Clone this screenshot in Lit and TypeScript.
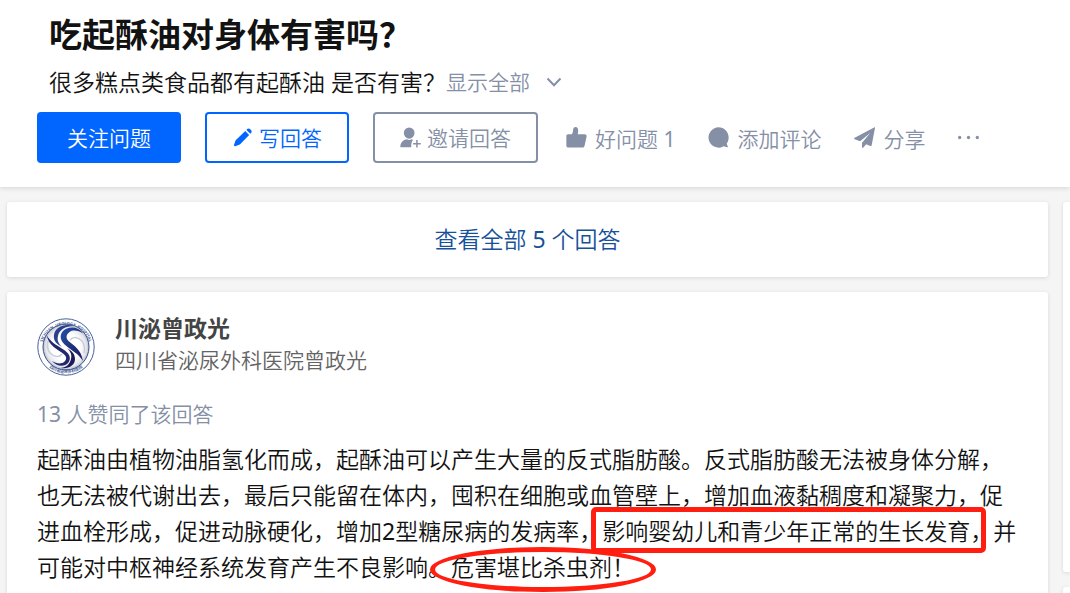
import { LitElement, html, css, svg } from "lit";
import { customElement } from "lit/decorators.js";

const pencil = svg`<svg class="icon" viewBox="0 0 24 24" aria-hidden="true"><path d="M15.2 4.6l4.4 4.4-10.300 10.600c-.3.3-.7.6-1.100.7l-4.600 1.700c-.9.300-1.600-.4-1.300-1.300l1.500-4.700c.1-.4.400-.8.700-1.100zM16.500 3.300l.9-.9c1-1 2.600-.9 3.500.1l.8.800c1 1 1 2.600.1 3.500l-.9.900z"/></svg>`;
const invite = svg`<svg class="icon" viewBox="0 0 24 24" aria-hidden="true"><ellipse cx="10.500" cy="6.900" rx="6.100" ry="6.400"/><path d="M.4 23.200c-.1-5.400 3.200-8.400 7.700-9.100 1 .9 4 .9 5 0 .9.200 1.300.4 1.700.7-1.300 1.600-2.200 3.900-2 8.400zM18.500 14.800h1.700v3.400h3.500v1.700h-3.500v3.500h-1.700v-3.500h-3.500v-1.700h3.500z"/></svg>`;
const thumb = svg`<svg class="icon" viewBox="0 0 24 24" aria-hidden="true"><path d="M.4 10.200c0-1.200.8-2 2-2h4.200c1-1 1.300-2.200 1.500-4.700C8.200 1.300 9.300 0 11 0c1.900 0 2.900 1.500 2.900 4 0 1.800-.2 2.900-.5 4.200h7.800c1.700 0 2.700 1.300 2.300 3l-2.200 9.800c-.4 1.700-1.300 2.500-3 2.500H2.900c-1.500 0-2.500-.9-2.500-2.400z"/></svg>`;
const bubble = svg`<svg class="icon" viewBox="0 0 24 24" aria-hidden="true"><path d="M12 .4C18.400.4 23.600 5.500 23.600 12c0 2.600-.8 5-2.200 6.900.1 1.300.8 2.400 1.300 3.300.3.600 0 1-.6.9-1.500-.1-3-.5-4.200-1A11.600 11.600 0 1 1 12 .4z"/></svg>`;
const plane = svg`<svg class="icon" viewBox="0 0 24 24" aria-hidden="true"><path d="M23.500.3L.8 12.300c-.9.500-.9 1.300 0 1.600l6.200 2.300L18.500 6.800 9.200 18v5c0 1 .9 1.200 1.500.5l3.200-3.700 4.700 1.900c.8.300 1.400 0 1.600-.9L24 1c.1-.6-.1-.9-.5-.7z"/></svg>`;
const dots = svg`<svg class="icon" viewBox="0 0 24 24" aria-hidden="true"><circle cx="1.900" cy="12" r="1.900"/><circle cx="12" cy="12" r="1.900"/><circle cx="22.100" cy="12" r="1.900"/></svg>`;
const chevron = svg`<svg class="chevron" viewBox="0 0 16 10" aria-hidden="true"><path d="M1.500 1.500L8 8.200l6.500-6.700"/></svg>`;

const emblem = svg`<svg class="avatar" viewBox="0 0 58 58" role="img" aria-label="川泌曾政光">
  <defs>
    <radialGradient id="ball" cx="50%" cy="50%" r="50%"><stop offset=".6" stop-color="#fff"/><stop offset=".88" stop-color="#e4e6ec"/><stop offset="1" stop-color="#b9bdce"/></radialGradient>
    <linearGradient id="blade" x1="0" y1="0" x2="1" y2="1"><stop offset="0" stop-color="#2450ab"/><stop offset="1" stop-color="#1d1658"/></linearGradient>
    <path id="arcTop" d="M4.800 31a24.200 24.200 0 0 1 48.400 0"/>
    <path id="arcBottom" d="M3 36a27.200 27.200 0 0 0 52 0"/>
  </defs>
  <circle cx="29" cy="29" r="28.200" fill="#fff" stroke="#4a6196" stroke-width="1"/>
  <circle cx="29" cy="29" r="23" fill="url(#ball)" stroke="#385189" stroke-width="1"/>
  <text class="ring"><textPath href="#arcTop" startOffset="50%" text-anchor="middle">SICHUAN  UROLOGY  HOSPITAL</textPath></text>
  <text class="ring"><textPath href="#arcBottom" startOffset="50%" text-anchor="middle">四川省泌尿外科医院</textPath></text>
  <path fill="none" stroke="#c9cdd9" stroke-width="1.500" d="M33 22c3-4 8-3 12 1 3 4 3 8 2 12M25 36c-3 4-8 3-12-1-3-4-3-8-2-12"/>
  <path fill="#23276e" d="M15 43c4 2.500 9 3.500 12 1 3.500-3 2.500-6-1-8.500C20 31 12 28 9.500 17c4 7 10 10 16 14 7 4 9 9 6 13.500-4 5-12 4-16.500-1.500z"/>
  <path fill="url(#blade)" d="M46 15.500c-4-3-10-4-13.500-1.500-4 3-3.500 6.500-1 9C37 28 44 31 46 43c-5-8-11-10-16-14.500-7-5-8-11-4-15.500 5-5 15-5 20 2.500z"/>
  <path fill="#2b3f8a" d="M37 8c-9-3-19 1-20 9-1 6 3 9 8 12-4-4-5-7-4-11 1-6 7-10 16-10z"/>
  <path fill="#1d1a5c" d="M23 50c9 1.500 15-3 15-9 0-5-3-8-8-11 4 4 5 7 4 11-1 5-5 9-11 9z"/>
</svg>`;

@customElement("app-root")
export class AppRoot extends LitElement {
  static styles = css`
    :host {
      display: block;
      font-family: "Noto Sans", "Noto Sans CJK SC", sans-serif;
      font-weight: 350;
      color: #121212;
    }
    * { box-sizing: border-box; }
    h1, h2, p { margin: 0; }
    .page {
      display: flex;
      flex-direction: column;
      height: 100vh;
      overflow: hidden;
      background: #f5f5f5;
    }
    .header {
      flex: none;
      padding: 12px 37px 24px;
      background: #fff;
      box-shadow: 0 1px 5px rgba(18, 18, 18, 0.14);
    }
    .intro { padding-left: 12px; }
    .title { font-size: 33px; line-height: 46px; font-weight: 700; }
    .detail {
      display: flex;
      align-items: center;
      margin-top: 6px;
      font-size: 23px;
      line-height: 36px;
    }
    button {
      font: inherit;
      color: inherit;
      background: none;
      border: 0;
      padding: 0;
      cursor: pointer;
      white-space: nowrap;
    }
    .more {
      display: flex;
      align-items: center;
      gap: 16px;
      font-size: 21px;
      color: #8590a6;
    }
    .chevron { width: 16px; height: 10px; fill: none; stroke: #8590a6; stroke-width: 2; }
    .actions {
      display: flex;
      align-items: center;
      gap: 24px;
      margin-top: 12px;
      font-size: 21px;
      line-height: 32px;
      color: #8590a6;
    }
    .icon { flex: none; width: 21px; height: 21px; fill: currentColor; }
    .btn {
      display: flex;
      align-items: center;
      justify-content: center;
      gap: 6px;
      height: 51px;
      padding: 0 25px;
      border: 2px solid currentColor;
      border-radius: 4px;
    }
    .primary { padding: 0 28px; background: #06f; border-color: #06f; color: #fff; }
    .outline { color: #06f; }
    .links { display: flex; align-items: center; gap: 33px; padding: 2px 0 0 4px; }
    .link { display: flex; align-items: center; gap: 8px; }
    .link .icon { margin-bottom: 2px; }
    .num { font-weight: 400; }
    .columns {
      flex: 1;
      display: grid;
      grid-template-columns: minmax(0, 1fr) 7px;
      gap: 15px;
      padding: 15px 0 0 7px;
      min-height: 0;
    }
    .stack { display: flex; flex-direction: column; gap: 15px; min-height: 0; }
    .card {
      background: #fff;
      border-radius: 3px;
      box-shadow: 0 1px 4px rgba(18, 18, 18, 0.12);
    }
    .all {
      flex: none;
      display: block;
      padding: 20px;
      text-align: center;
      text-decoration: none;
      font-size: 23px;
      line-height: 35px;
      color: #175199;
    }
    .answer { flex: 1 0 auto; padding: 20px 30px 30px; }
    .author { display: flex; align-items: flex-end; gap: 20px; }
    .avatar { flex: none; width: 58px; height: 58px; }
    .ring { font-size: 4px; font-weight: 700; fill: #4a6196; white-space: pre; }
    .name { font-size: 23px; line-height: 32px; font-weight: 700; color: #444; }
    .bio { font-size: 21px; line-height: 32px; color: #646464; }
    .votes { margin-top: 22px; font-size: 21px; line-height: 32px; color: #8590a6; }
    .text { margin-top: 11px; font-size: 23px; line-height: 36px; }
    .boxed, .circled { position: relative; }
    .boxed::after, .circled::after {
      content: "";
      position: absolute;
      border: 5px solid #ff1e10;
      pointer-events: none;
    }
    .boxed::after { inset: -8px -16px -6px -11px; border-radius: 5px; }
    .circled::after { inset: -4px -21px -9px; border-radius: 50%; }
    .side { border-radius: 3px 0 0 3px; }
    .side.first { flex: 0 0 370px; }
    .side.next { flex: 1 0 60px; }
  `;

  render() {
    return html`
      <div class="page" lang="zh-CN">
        <header class="header">
          <div class="intro">
            <h1 class="title">吃起酥油对身体有害吗？</h1>
            <div class="detail">
              <span>很多糕点类食品都有起酥油 是否有害？</span>
              <button class="more">显示全部${chevron}</button>
            </div>
          </div>
          <div class="actions">
            <button class="btn primary">关注问题</button>
            <button class="btn outline">${pencil}写回答</button>
            <button class="btn">${invite}邀请回答</button>
            <div class="links">
              <button class="link">${thumb}<span>好问题 <span class="num">1</span></span></button>
              <button class="link">${bubble}添加评论</button>
              <button class="link">${plane}分享</button>
              <button class="link" aria-label="更多">${dots}</button>
            </div>
          </div>
        </header>
        <div class="columns">
          <main class="stack">
            <a class="card all" href="#answers">查看全部 <span class="num">5</span> 个回答</a>
            <article class="card answer">
              <div class="author">
                ${emblem}
                <div>
                  <h2 class="name">川泌曾政光</h2>
                  <p class="bio">四川省泌尿外科医院曾政光</p>
                </div>
              </div>
              <p class="votes"><span class="num">13</span> 人赞同了该回答</p>
              <p class="text">起酥油由植物油脂氢化而成，起酥油可以产生大量的反式脂肪酸。反式脂肪酸无法被身体分解，也无法被代谢出去，最后只能留在体内，囤积在细胞或血管壁上，增加血液黏稠度和凝聚力，促进血栓形成，促进动脉硬化，增加<span class="num">2</span>型糖尿病的发病率，<span class="boxed">影响婴幼儿和青少年正常的生长发育</span>，并可能对中枢神经系统发育产生不良影响。<span class="circled">危害堪比杀虫剂！</span></p>
            </article>
          </main>
          <aside class="stack">
            <div class="card side first"></div>
            <div class="card side next"></div>
          </aside>
        </div>
      </div>
    `;
  }
}
